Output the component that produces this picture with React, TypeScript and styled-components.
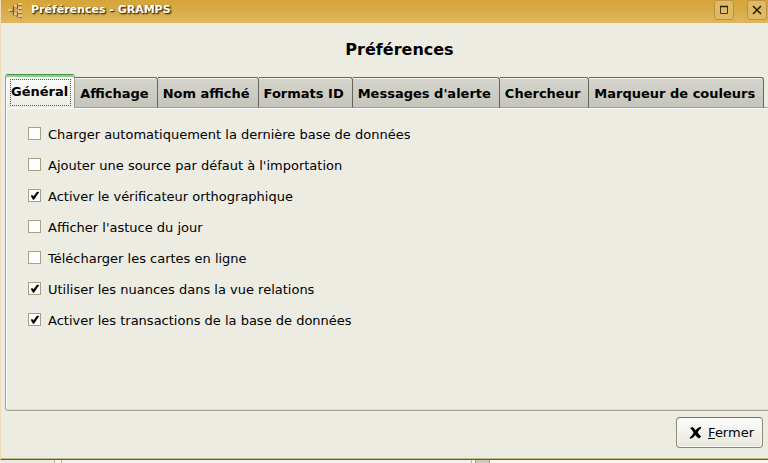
import React, { useState } from "react";
import styled, { createGlobalStyle } from "styled-components";

const GlobalStyle = createGlobalStyle`
  *, *::before, *::after { box-sizing: border-box; }
  html, body, #root { height: 100%; }
  body {
    margin: 0;
    overflow: hidden;
    background: #f4f4f0;
    color: #000;
    font: 13px/16px "DejaVu Sans", sans-serif;
  }
  button, input { font: inherit; color: inherit; }
`;

const Desktop = styled.div`
  height: 100%;
  display: flex;
  flex-direction: column;
`;

const Dialog = styled.section`
  flex: 1;
  display: flex;
  flex-direction: column;
  background: #ecece3;
  border-left: 1px solid #efdfb9;
  border-bottom: 1px solid #75571c;
  box-shadow: inset 0 -1px #c5b68f;
`;

const TitleBar = styled.header`
  height: 23px;
  display: flex;
  align-items: center;
  padding: 0 1px 3px 6px;
  gap: 8px;
  background: linear-gradient(#d6a539, #d8aa45 40%, #dfb75d);
`;

const WindowTitle = styled.span`
  flex: 1;
  color: #fff;
  font-size: 11px;
  font-weight: bold;
  text-shadow: 1px 1px 1px #4d3504, 1px 1px 2px #4d3504;
`;

const WindowButtons = styled.div`
  display: flex;
  gap: 13px;
`;

const WindowButton = styled.button`
  width: 20px;
  height: 20px;
  padding: 0;
  display: grid;
  place-items: center;
  border: 1px solid #bd9340;
  border-radius: 3px;
  background: #dfb965;
`;

const Heading = styled.h1`
  margin: 0;
  padding: 17px 0 14px 30px;
  font-size: 16px;
  line-height: 20px;
  text-align: center;
`;

const TabBar = styled.div`
  display: flex;
  align-items: flex-end;
  margin-left: 4px;
  height: 34px;

  &::after {
    content: "";
    flex: 1;
    border-bottom: 1px solid #a3a18a;
  }
`;

const Tab = styled.button<{ $active: boolean }>`
  flex: none;
  position: relative;
  height: ${(p) => (p.$active ? 34 : 31)}px;
  margin: 0;
  padding: ${(p) => (p.$active ? "1px 6px 0 5px" : "3px 8px 0 5px")};
  border: solid #65655b;
  border-width: 1px 1px 0 0;
  border-radius: 0 3px 0 0;
  border-bottom: 1px solid #a3a18a;
  background: linear-gradient(#d5d5cd, #c5c5bc);
  box-shadow: inset 0 1px #f5f5ee;
  font-weight: bold;
  line-height: 16px;
  white-space: nowrap;
  outline: none;

  ${(p) =>
    p.$active &&
    `
    border: solid #a3a18a;
    border-width: 0 1px 0 1px;
    border-top: 1px solid #4c8f4c;
    border-radius: 3px 3px 0 0;
    background: linear-gradient(#fdfefe, #ecece3);
    box-shadow: inset 0 2px #8ad18a, inset 1px 0 #fff;
    &::after {
      content: "";
      position: absolute;
      inset: 4px 3px 2px 4px;
      border: 1px dotted #55554d;
    }
  `}
`;

const Panel = styled.div`
  flex: 1;
  margin-left: 4px;
  padding: 19px 22px;
  border-left: 1px solid #a3a18a;
  border-bottom: 1px solid #a9a58a;
  border-radius: 0 0 0 3px;
  box-shadow: inset 1px 1px #fff, inset 0 -1px #ddd8c4;
`;

const OptionList = styled.div`
  display: flex;
  flex-direction: column;
  align-items: flex-start;
  gap: 15px;
`;

const Option = styled.label`
  display: flex;
  align-items: flex-start;
  gap: 7px;
`;

const CheckFrame = styled.span`
  display: grid;
  width: 13px;
  height: 13px;

  > * { grid-area: 1 / 1; }
  svg { pointer-events: none; visibility: hidden; }
  input:checked + svg { visibility: visible; }
`;

const CheckInput = styled.input`
  appearance: none;
  width: 13px;
  height: 13px;
  margin: 0;
  border: 1px solid #a5a183;
  background: #fff;
`;

const Footer = styled.footer`
  display: flex;
  justify-content: flex-end;
  padding: 6px 5px 11px;
`;

const CloseButton = styled.button`
  height: 31px;
  display: flex;
  align-items: center;
  gap: 6px;
  padding: 0 8px 0 12px;
  border: 1px solid #8d8a70;
  border-top-color: #77776a;
  border-radius: 4px;
  background: linear-gradient(#fcfdfd, #ecece3 80%, #e6e5da);
  box-shadow: inset 0 0 0 1px #f8f8f2;
`;

const Behind = styled.div`
  height: 3px;
  display: flex;
  background: #f6f4ec;
`;

const BehindSide = styled.div`
  width: 55px;
  background: #ebeae0;
  border-right: 1px solid #b6b69f;
`;

const BehindPane = styled.div`
  width: 411px;
  margin-left: 6px;
  background: #f1f1f1;
  border: solid #b6b69f;
  border-width: 0 1px;
`;

const BehindScroll = styled.div`
  width: 15px;
  margin-left: 3px;
  background: #cbccb8;
  border: solid #a3a18a;
  border-width: 0 1px;
`;

const tabs = [
  "Général",
  "Affichage",
  "Nom affiché",
  "Formats ID",
  "Messages d'alerte",
  "Chercheur",
  "Marqueur de couleurs",
];

const options = [
  { label: "Charger automatiquement la dernière base de données", on: false },
  { label: "Ajouter une source par défaut à l'importation", on: false },
  { label: "Activer le vérificateur orthographique", on: true },
  { label: "Afficher l'astuce du jour", on: false },
  { label: "Télécharger les cartes en ligne", on: false },
  { label: "Utiliser les nuances dans la vue relations", on: true },
  { label: "Activer les transactions de la base de données", on: true },
];

const TreeIcon = () => (
  <svg width="16" height="16" viewBox="0 0 16 16" aria-hidden="true">
    <path d="M4 8.500h3M10 4.500H6.500v8H10M11.500 2.500h-1v4h1M11.500 10.500h-1v4h1" fill="none" stroke="#7a5a26" strokeWidth="1.300" />
    <g fill="#8a6d40">
      <rect x="2" y="8" width="4" height="2" />
      <rect x="12" y="2" width="3" height="2" />
      <rect x="12" y="6" width="3" height="2" />
      <rect x="12" y="10" width="3" height="2" />
      <rect x="12" y="14" width="3" height="2" />
    </g>
    <g fill="#dcc8a8">
      <rect x="1" y="7" width="4" height="2" />
      <rect x="11" y="1" width="4" height="2" />
      <rect x="11" y="5" width="4" height="2" />
      <rect x="11" y="9" width="4" height="2" />
      <rect x="11" y="13" width="4" height="2" />
      <rect x="7" y="3" width="3" height="2" />
      <rect x="7" y="11" width="3" height="2" />
    </g>
  </svg>
);

const CheckMark = () => (
  <svg width="13" height="13" viewBox="0 0 13 13" aria-hidden="true">
    <path d="M3 7l1-1 1.500 1.500L9 3h2L6 10.500H5z" fill="#000" stroke="#000" strokeWidth=".4" />
  </svg>
);

export default function App() {
  const [active, setActive] = useState(0);
  return (
    <>
      <GlobalStyle />
      <Desktop>
        <Dialog aria-label="Préférences">
          <TitleBar>
            <TreeIcon />
            <WindowTitle>Préférences - GRAMPS</WindowTitle>
            <WindowButtons>
              <WindowButton aria-label="Agrandir">
                <svg width="10" height="10" viewBox="0 0 10 10">
                  <path d="M1.500 1v7.500h7V1" fill="none" stroke="#443210" />
                  <path d="M1 1.500h8" stroke="#2b1e05" strokeWidth="1.500" />
                </svg>
              </WindowButton>
              <WindowButton aria-label="Fermer la fenêtre">
                <svg width="10" height="10" viewBox="0 0 10 10">
                  <path d="M1 1l8 8M9 1L1 9" stroke="#2b1e05" strokeWidth="1.600" />
                </svg>
              </WindowButton>
            </WindowButtons>
          </TitleBar>
          <Heading>Préférences</Heading>
          <TabBar role="tablist">
            {tabs.map((name, i) => (
              <Tab
                key={name}
                role="tab"
                aria-selected={i === active}
                $active={i === active}
                onClick={() => setActive(i)}
              >
                {name}
              </Tab>
            ))}
          </TabBar>
          <Panel role="tabpanel">
            <OptionList>
              {options.map((o) => (
                <Option key={o.label}>
                  <CheckFrame>
                    <CheckInput type="checkbox" defaultChecked={o.on} />
                    <CheckMark />
                  </CheckFrame>
                  {o.label}
                </Option>
              ))}
            </OptionList>
          </Panel>
          <Footer>
            <CloseButton>
              <svg width="13" height="14" viewBox="0 0 13 14" aria-hidden="true">
                <path
                  d="M1 2l2.500-1c1.300.8 2.300 2 3 3.200C8 2.500 9.500 1 12 .8v1.700C10.500 3.500 9.500 4.800 8.700 6.300c1 1.800 2 3 3.500 4.200L10 12.500C8.500 11.500 7.300 10.500 6.300 9 5 11 3.500 12.300 1 12.700l-.3-1.200C2.500 10 3.800 8.500 4.500 6.700 3.500 4.800 2.500 3.300 1 2z"
                  fill="#000"
                />
              </svg>
              <span>
                <u>F</u>ermer
              </span>
            </CloseButton>
          </Footer>
        </Dialog>
        <Behind>
          <BehindSide />
          <BehindPane />
          <BehindScroll />
        </Behind>
      </Desktop>
    </>
  );
}
